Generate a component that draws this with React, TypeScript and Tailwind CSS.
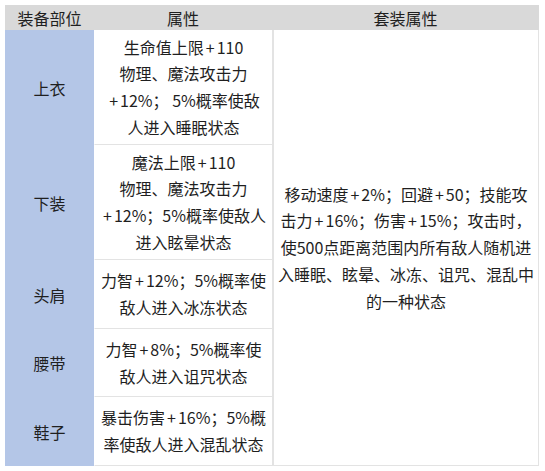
const ROWS = [
  { part: "上衣", lines: ["生命值上限+110", "物理、魔法攻击力", "+12%； 5%概率使敌", "人进入睡眠状态"] },
  { part: "下装", lines: ["魔法上限+110", "物理、魔法攻击力", "+12%；5%概率使敌人", "进入眩晕状态"] },
  { part: "头肩", lines: ["力智+12%；5%概率使", "敌人进入冰冻状态"] },
  { part: "腰带", lines: ["力智+8%；5%概率使", "敌人进入诅咒状态"] },
  { part: "鞋子", lines: ["暴击伤害+16%；5%概", "率使敌人进入混乱状态"] },
];

const SET_LINES = [
  "移动速度+2%；回避+50；技能攻",
  "击力+16%；伤害+15%；攻击时，",
  "使500点距离范围内所有敌人随机进",
  "入睡眠、眩晕、冰冻、诅咒、混乱中",
  "的一种状态",
];

// the "+" in the source font sits with a little air on both sides
function Line({ text }: { text: string }) {
  const parts = text.split("+");
  return (
    <span>
      {parts.map((p, i) => (
        <span key={i}>
          {i > 0 && <span className="mx-[2px]">+</span>}
          {p}
        </span>
      ))}
    </span>
  );
}

export default function App() {
  return (
    <div
      className="w-[545px] h-[471px] bg-white pt-[5px] pl-[5px] text-[16px] text-[#1f1f1f]"
      style={{ fontFamily: '"Noto Sans CJK SC", "Noto Sans", sans-serif' }}
    >
      <div className="grid grid-cols-[89px_178px_267px] grid-rows-[25px_115px_115px_69px_68px_69px] w-[534px]">
        {/* Header */}
        <div className="bg-[#d9d9d9] flex items-center justify-center leading-none">装备部位</div>
        <div className="bg-[#d9d9d9] flex items-center justify-center leading-none">属性</div>
        <div className="bg-[#d9d9d9] flex items-center justify-center leading-none">套装属性</div>

        {ROWS.map((r, i) => (
          <div
            key={r.part}
            className="bg-[#b4c6e7] flex items-center justify-center"
            style={{ gridRow: i + 2, gridColumn: 1 }}
          >
            {r.part}
          </div>
        ))}

        {ROWS.map((r, i) => (
          <div
            key={r.part + "-attr"}
            className="border-l border-l-white border-b border-[#e3e3e3] flex flex-col items-center justify-center leading-[26.7px] whitespace-nowrap"
            style={{ gridRow: i + 2, gridColumn: 2 }}
          >
            {r.lines.map((l) => (
              <Line key={l} text={l} />
            ))}
          </div>
        ))}

        {/* Set bonus spans all rows */}
        <div className="row-start-2 row-end-7 col-start-3 border-l-2 border-r border-b border-[#e3e3e3] flex flex-col items-center justify-center leading-[26.7px] whitespace-nowrap">
          {SET_LINES.map((l) => (
            <Line key={l} text={l} />
          ))}
        </div>
      </div>
    </div>
  );
}
